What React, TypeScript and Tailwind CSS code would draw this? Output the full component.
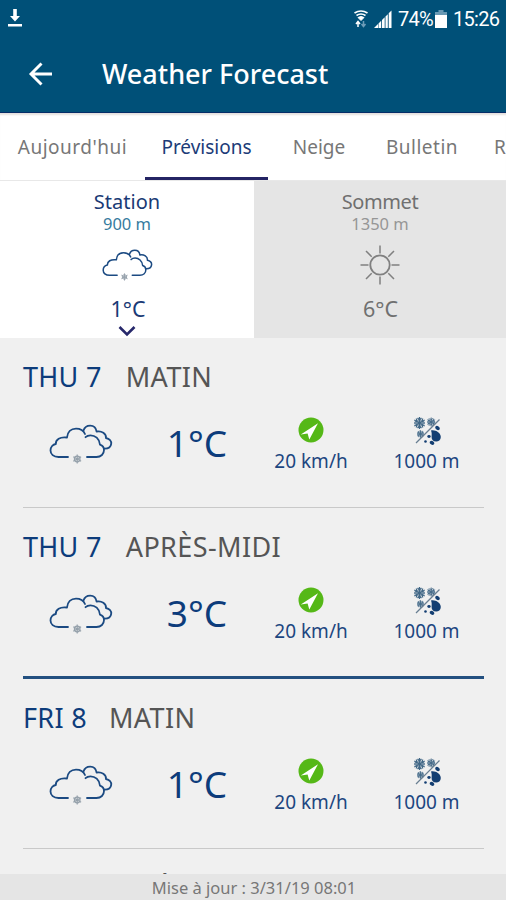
import type { ReactNode } from 'react';

function CloudSnow({ width, height, stroke }: { width: number; height: number; stroke: number }) {
  return (
    <svg width={width} height={height} viewBox="0 0 64 40" fill="none" className="block">
      <g stroke="#1b4a82" strokeWidth={stroke} strokeLinecap="round" strokeLinejoin="round">
        <path d="M19 33H9.500C4.500 33 1.500 30 1.500 26.500C1.500 23 4 20.500 6.800 20C6.500 15.500 11 12.500 18 13.500C18.500 8 22 4.600 27 4.600C31.500 4.600 34.500 6.500 36 10" />
        <path d="M38 33H47.500C52 33 55 30 55 26C55 23 53.200 21.400 51 20.700C50.500 14.500 46 11.300 41.500 11.300C39.500 11.300 37.700 12 36.500 13.200" />
        <path d="M34.500 6.500C35.500 3.200 38 1.600 41.200 1.600C44.500 1.600 47 3.500 47.600 7.500C52.500 6.500 57.500 9.500 57 14C60.500 14.700 62.500 17.200 62.200 19.800C61.800 23 59.500 24.800 55 24.600" />
      </g>
      <g stroke="#95a1ab" strokeWidth="1.200">
        <path d="M28.200 30.500v9M24.300 32.700l7.800 4.600M24.300 37.300l7.800-4.600" />
        <circle cx="28.200" cy="35" r="2.800" />
      </g>
    </svg>
  );
}

function Sun() {
  return (
    <svg width="40" height="40" viewBox="0 0 40 40" fill="none" stroke="#808080" strokeWidth="1.500" className="block">
      <circle cx="20" cy="20" r="9.700" strokeWidth="1.800" />
      <path d="M20 0.500v8M20 31.500v8M0.500 20h8M31.500 20h8M6 6l5.700 5.700M28.300 28.300l5.700 5.700M6 34l5.700-5.700M28.300 11.700L34 6" />
    </svg>
  );
}

function Wind() {
  return (
    <svg width="26" height="26" viewBox="0 0 26 26" className="block">
      <circle cx="13" cy="13" r="12.500" fill="#55b817" />
      <path d="M20 6.200L2.800 17.400L9.600 16.400L11.300 22.500Z" fill="#fff" />
    </svg>
  );
}

function Flake({ x, y, s }: { x: number; y: number; s: number }) {
  return (
    <g transform={`translate(${x} ${y}) scale(${s})`} stroke="#416786" strokeWidth="1.200" fill="none">
      <circle r="3.800" fill="#8fa5b7" stroke="none" />
      <path d="M0-6V6M-5.200-3L5.200 3M-5.200 3L5.200-3M-2-5L0-3L2-5M-2 5L0 3L2 5M-5.200-.5L-2.600-1.500L-3.200-4.500M5.200 .5L2.600 1.500L3.200 4.500M-5.200 .5L-2.600 1.500L-3.200 4.500M5.200-.5L2.600-1.500L3.200-4.500" />
    </g>
  );
}

function RainSnow() {
  return (
    <svg width="28" height="28" viewBox="0 0 28 28" className="block">
      <Flake x={6.500} y={6} s={1} />
      <Flake x={18.200} y={5} s={0.750} />
      <Flake x={7.500} y={17} s={0.650} />
      <path d="M3 26L26.500 2.500" stroke="#687e91" strokeWidth="1.200" />
      <g fill="#133e72">
        <path d="M18 13.500C22 12.500 27.800 15.500 27.800 20C27.800 23 25.500 24.500 23.200 24.500C20 24.500 18.500 22.500 18.600 20C18.700 17.500 19 16 18 13.500Z" />
        <ellipse cx="24.500" cy="11" rx="2.500" ry="1.900" transform="rotate(35 24.500 11)" />
        <ellipse cx="16" cy="19.500" rx="1.700" ry="1.400" />
        <ellipse cx="19" cy="25.800" rx="2.400" ry="1.800" transform="rotate(35 19 25.800)" />
        <circle cx="12.500" cy="24.500" r="1.300" />
      </g>
    </svg>
  );
}

function StatusBar() {
  return (
    <div className="flex h-9 items-center pl-2 pr-[6px] text-white">
      <svg width="14" height="20" viewBox="0 0 14 20" className="block" fill="#fff">
        <path d="M5.200 1h3.600v7H12l-5 5.500L2 8h3.200zM0 16h14v2.500H0z" />
      </svg>
      <div className="ml-auto flex items-center pt-px font-[Roboto,sans-serif] text-[20px] leading-none">
        <svg width="14" height="18" viewBox="0 0 14 18" fill="none" stroke="#fff" className="block">
          <path d="M.5 3Q7-1 13.500 3M2.500 5.500Q7 2.500 11.500 5.500" strokeWidth="1.700" />
          <path d="M4 7.500Q7 5.500 10 7.500L7 10.500Z" fill="#fff" strokeWidth="1" />
          <path d="M4 17v-5M2 14l2-2.500L6 14" strokeWidth="1.500" />
          <path d="M9.500 11v5M7.500 14l2 2.500l2-2.500" stroke="#6e9cb8" strokeWidth="1.500" />
        </svg>
        <svg width="18" height="18" viewBox="0 0 18 18" className="ml-[6px] block">
          <path d="M0 18L4 14V18zM4.500 13.500L7.200 10.800V18H4.500zM8 10L10.700 7.300V18H8zM11.500 6.500L13.800 4.200V18h-2.300zM14.700 3.300L17.500.5V18h-2.800z" fill="#fff" />
        </svg>
        <span className="ml-[6px] w-[35px] whitespace-nowrap tracking-[-0.8px]">74%</span>
        <svg width="12" height="18" viewBox="0 0 12 18" className="ml-[2px] block">
          <path d="M3.500 0h5v2H12v3H0V2h3.500z" fill="#6798b3" />
          <path d="M0 5h12v13H0z" fill="#fff" />
        </svg>
        <span className="ml-[6px] w-[47px] whitespace-nowrap tracking-[-0.7px]">15:26</span>
      </div>
    </div>
  );
}

function Tab({ children, className }: { children: ReactNode; className: string }) {
  return <div className={`flex shrink-0 justify-center whitespace-nowrap pt-[20px] ${className}`}>{children}</div>;
}

interface ForecastRowProps {
  day: string;
  part: string;
  temp: string;
  divider: string;
  heading?: string;
}

function ForecastRow({ day, part, temp, divider, heading = 'gap-6 pt-[24px]' }: ForecastRowProps) {
  return (
    <section className="pl-[23px] pr-[22px]">
      <div className="h-[169px]">
        <h2 className={`flex text-[27px] leading-[30px] tracking-[0.3px] text-[#0d3c7b] ${heading}`}>
          <span>{day}</span>
          <span className="tracking-[0.4px] text-[#555]">{part}</span>
        </h2>
        <div className="flex pt-[24px]">
          <div className="w-[115px] pl-[26px] pt-[8px]">
            <CloudSnow width={64} height={40} stroke={1.8} />
          </div>
          <div className="w-[118px] text-center text-[37px] leading-[54px] text-[#0d3c7b]">{temp}</div>
          <div className="flex w-[110px] flex-col items-center pt-px">
            <Wind />
            <span className="mt-[5px] text-[19px] leading-[26px] text-[#1d4680]">20 km/h</span>
          </div>
          <div className="flex w-[116px] flex-col items-center pl-[5px] pt-px">
            <RainSnow />
            <span className="mt-[3px] text-[19px] leading-[26px] text-[#1d4680]">1000 m</span>
          </div>
        </div>
      </div>
      <div className={divider} />
    </section>
  );
}

export default function App() {
  return (
    <div className="flex h-[900px] w-[506px] flex-col overflow-hidden bg-[#f0f0f0] font-['Noto_Sans',sans-serif]">
      <header className="h-[113px] shrink-0 border-b border-[#062d68] bg-[#005078]">
        <StatusBar />
        <div className="flex items-center pl-7 pt-[18px]">
          <svg width="25" height="24" viewBox="0 0 25 24" fill="none" stroke="#fff" strokeWidth="2.900" className="block">
            <path d="M24 12H3M13.500 1.500L3 12L13.500 22.500" />
          </svg>
          <h1 className="ml-[49px] whitespace-nowrap text-[27px] font-medium leading-[40px] text-white">Weather Forecast</h1>
        </div>
      </header>
      <nav className="flex h-[68px] shrink-0 overflow-hidden border-b border-[#e8e8e8] bg-white text-[19px] leading-[28px] text-[#777] shadow-[inset_0_3px_2px_-1px_#e4e0de]">
        <Tab className="w-[145px] tracking-[0.5px]">Aujourd'hui</Tab>
        <Tab className="w-[123px] border-b-[3px] border-[#242464] text-[#1c3c78]">Prévisions</Tab>
        <Tab className="w-[102px]">Neige</Tab>
        <Tab className="w-[104px] tracking-[0.5px]">Bulletin</Tab>
        <Tab className="pl-[20px]">R</Tab>
      </nav>
      <div className="flex h-[157px] shrink-0 text-center">
        <div className="flex w-[254px] flex-col items-center bg-white text-[#1a3a75]">
          <div className="pt-[9px] text-[20px] leading-[24px]">Station</div>
          <div className="text-[16.5px] leading-[20px] text-[#367b9e]">900 m</div>
          <div className="mt-[15px]">
            <CloudSnow width={51} height={32} stroke={1.9} />
          </div>
          <div className="mt-[14px] pl-[2px] text-[21.500px] leading-[28px]">1°C</div>
          <svg width="18" height="11" viewBox="0 0 18 11" fill="none" stroke="#27286b" strokeWidth="2.600" className="mt-[3px] block">
            <path d="M1.500 1L9 8.500L16.500 1" />
          </svg>
        </div>
        <div className="flex w-[252px] flex-col items-center bg-[#e5e5e5] text-[#707070]">
          <div className="pt-[9px] text-[20px] leading-[24px] tracking-[-0.4px]">Sommet</div>
          <div className="text-[16.5px] leading-[20px] text-[#969696]">1350 m</div>
          <div className="mt-[11px]">
            <Sun />
          </div>
          <div className="mt-[10px] pl-px text-[21.500px] leading-[28px]">6°C</div>
        </div>
      </div>
      <main className="min-h-0 flex-1 overflow-hidden">
        <ForecastRow day="THU 7" part="MATIN" temp="1°C" divider="h-px bg-[#c9c9c9]" />
        <ForecastRow day="THU 7" part="APRÈS-MIDI" temp="3°C" divider="-mb-px h-[3px] -translate-y-px bg-[#235080]" />
        <ForecastRow day="FRI 8" part="MATIN" temp="1°C" divider="h-px bg-[#c9c9c9]" heading="gap-[22px] pt-[24px]" />
        <ForecastRow day="FRI 8" part="APRÈS-MIDI" temp="3°C" divider="h-px bg-[#c9c9c9]" heading="gap-[20px] pt-[25px]" />
      </main>
      <footer className="h-[26px] shrink-0 bg-[#e5e5e5] pl-[2px] text-center text-[16.5px] leading-[27px] text-[#777]">
        Mise à jour : 3/31/19 08:01
      </footer>
    </div>
  );
}
